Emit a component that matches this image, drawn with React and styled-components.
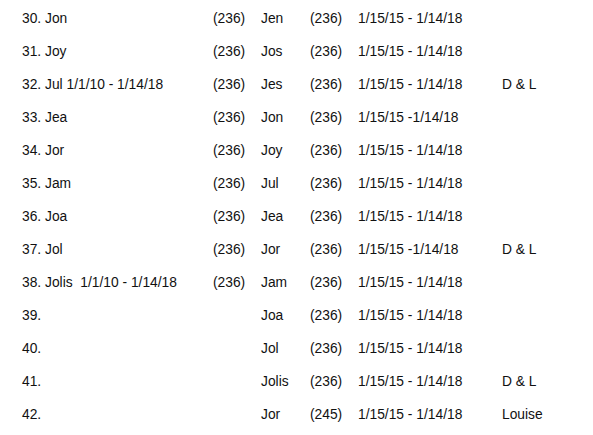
import React from "react";
import styled, { createGlobalStyle } from "styled-components";

const rows = [
  ["30. Jon", "(236)", "Jen", "(236)", "1/15/15 - 1/14/18", ""],
  ["31. Joy", "(236)", "Jos", "(236)", "1/15/15 - 1/14/18", ""],
  ["32. Jul 1/1/10 - 1/14/18", "(236)", "Jes", "(236)", "1/15/15 - 1/14/18", "D & L"],
  ["33. Jea", "(236)", "Jon", "(236)", "1/15/15 -1/14/18", ""],
  ["34. Jor", "(236)", "Joy", "(236)", "1/15/15 - 1/14/18", ""],
  ["35. Jam", "(236)", "Jul", "(236)", "1/15/15 - 1/14/18", ""],
  ["36. Joa", "(236)", "Jea", "(236)", "1/15/15 - 1/14/18", ""],
  ["37. Jol", "(236)", "Jor", "(236)", "1/15/15 -1/14/18", "D & L"],
  ["38. Jolis\u00a0 1/1/10 - 1/14/18", "(236)", "Jam", "(236)", "1/15/15 - 1/14/18", ""],
  ["39.", "", "Joa", "(236)", "1/15/15 - 1/14/18", ""],
  ["40.", "", "Jol", "(236)", "1/15/15 - 1/14/18", ""],
  ["41.", "", "Jolis", "(236)", "1/15/15 - 1/14/18", "D & L"],
  ["42.", "", "Jor", "(245)", "1/15/15 - 1/14/18", "Louise"],
];

export default function App() {
  return (
    <>
      <GlobalStyle />
      <Sheet>
        {rows.map((row, i) => (
          <Row key={i}>
            {row.map((cell, j) => (
              <Cell key={j}>{cell}</Cell>
            ))}
          </Row>
        ))}
      </Sheet>
    </>
  );
}

const GlobalStyle = createGlobalStyle`
  body {
    margin: 0;
    background: #fff;
  }
`;

const Sheet = styled.div`
  padding: 2px 0 0 22px;
  font-family: "Liberation Sans", Arial, sans-serif;
  font-size: 13.8px;
  color: #111;
`;

const Row = styled.div`
  display: grid;
  grid-template-columns: 191px 48px 49px 48px 144px 1fr;
  align-items: center;
  height: 33px;
`;

const Cell = styled.div`
  white-space: nowrap;
`;
